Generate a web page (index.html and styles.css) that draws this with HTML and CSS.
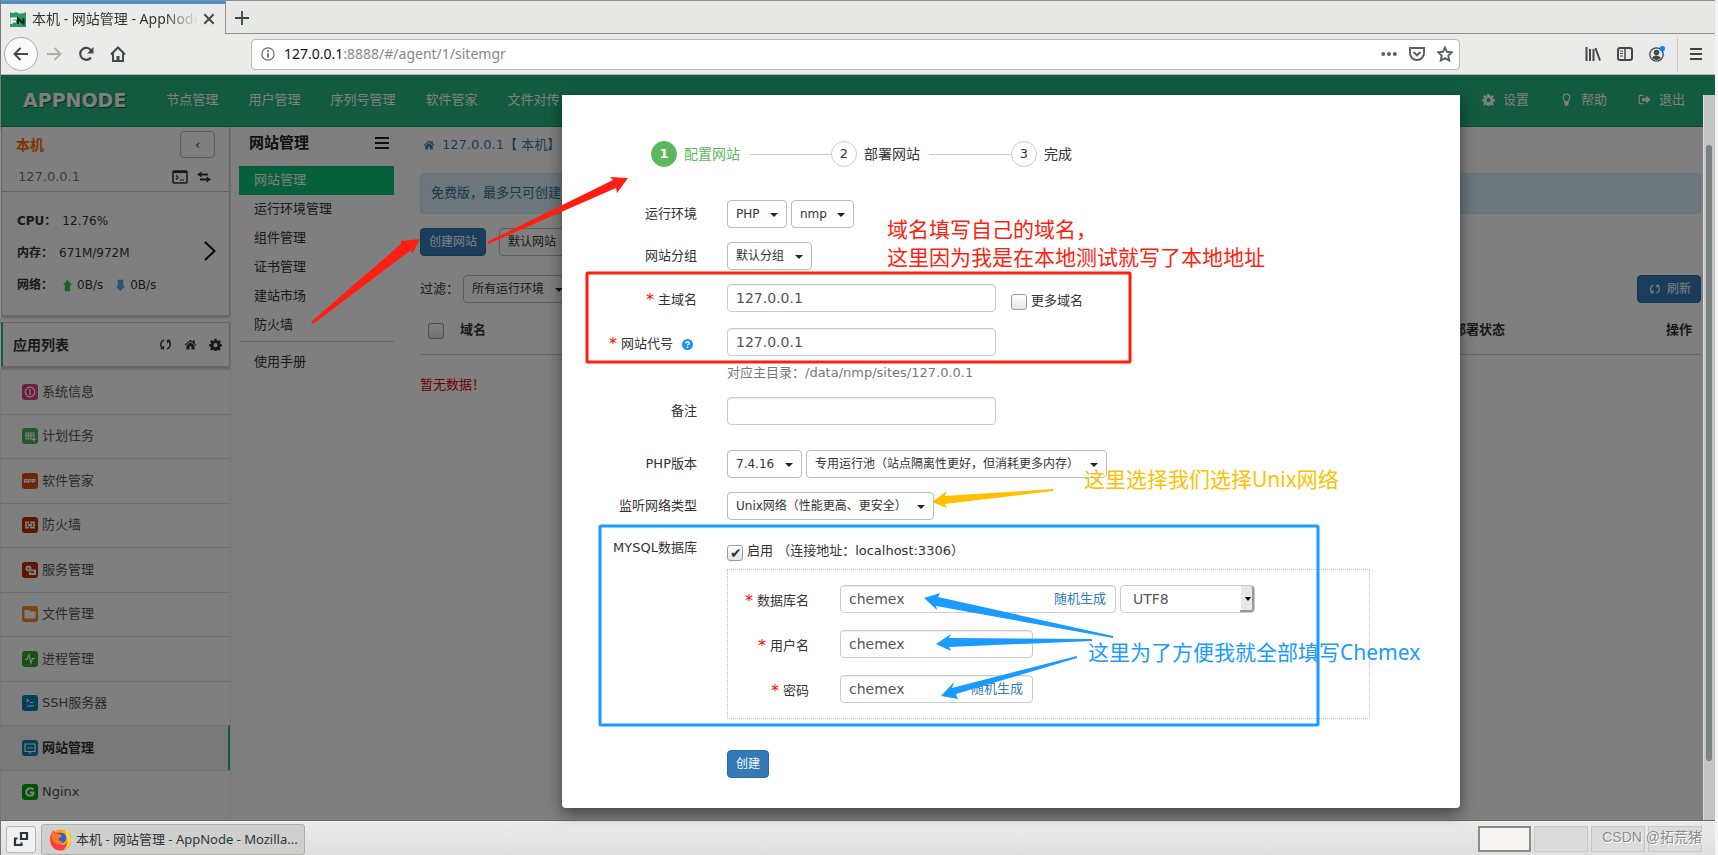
FILE: index.html
```html
<!DOCTYPE html>
<html lang="zh-CN">
<head>
<meta charset="utf-8">
<title>本机 - 网站管理 - AppNode</title>
<link rel="stylesheet" href="styles.css">
</head>
<body>
<svg class="sprite" aria-hidden="true">
  <symbol id="i-home" viewBox="0 0 16 16"><path d="M8 2 .8 8.3l.9 1L8 3.900l6.300 5.400.9-1L13 6.300V2.800h-2v1.800zM8 5.200 3 9.500V14h3.800v-3.800h2.400V14H13V9.500z" fill="currentColor"/></symbol>
  <symbol id="i-gear" viewBox="0 0 16 16"><path fill="currentColor" fill-rule="evenodd" d="M6.700 1h2.600l.4 2 1.400.6 1.700-1.200 1.800 1.800-1.200 1.700.6 1.400 2 .4v2.600l-2 .4-.6 1.400 1.200 1.700-1.800 1.800-1.700-1.200-1.400.6-.4 2H6.700l-.4-2-1.400-.6-1.700 1.200-1.800-1.800 1.200-1.700L2 10.700l-2-.4V7.700l2-.4.6-1.400-1.200-1.700 1.800-1.800 1.700 1.200L6.300 3zM8 6.300a2.500 2.500 0 1 0 0 5 2.500 2.500 0 0 0 0-5z"/></symbol>
  <symbol id="i-sync" viewBox="0 0 16 16"><path d="M6 2.500A6 6 0 0 0 4 12.500M10 13.500a6 6 0 0 0 2-10" fill="none" stroke="currentColor" stroke-width="1.800"/><path d="M1.500 13.800h4.700V9.200zM14.500 2.200H9.800v4.600z" fill="currentColor"/></symbol>
  <symbol id="i-lamp" viewBox="0 0 16 16"><path d="M5.800 10.500C5.500 8.800 4 8 4 5.500a4 4 0 0 1 8 0c0 2.500-1.500 3.300-1.800 5z" fill="none" stroke="currentColor" stroke-width="1.500"/><path d="M5.500 11h5v3l-1.500 2H7l-1.500-2z" fill="currentColor"/></symbol>
  <symbol id="i-exit" viewBox="0 0 16 16"><path d="M6.500 3H3a1.500 1.500 0 0 0-1.500 1.500v7A1.500 1.500 0 0 0 3 13h3.500" fill="none" stroke="currentColor" stroke-width="1.600"/><path d="M5 6h5V3l5.500 5L10 13v-3H5z" fill="currentColor"/></symbol>
</svg>

<div class="browser">
  <div class="tabs">
    <div class="tab">
      <svg class="fav" viewBox="0 0 16 16"><path fill="#2b9a66" d="M0 1q3 2 6 0 4 3 10 0v15H0z"/><path d="M1.500 13V7.500H7M1.500 10.500H6" fill="none" stroke="#fff" stroke-width="2"/><path d="M8 13V7.500l5.500 5V7" fill="none" stroke="#10271c" stroke-width="2"/></svg>
      <span class="tab-title">本机 - 网站管理 - AppNode</span>
      <button class="plain" aria-label="关闭标签"><svg class="x" viewBox="0 0 12 12"><path d="M2 2l8 8M10 2l-8 8" stroke="#4a4f50" stroke-width="1.800"/></svg></button>
    </div>
    <button class="plain newtab" aria-label="新标签"><svg viewBox="0 0 14 14"><path d="M7 0v14M0 7h14" stroke="#3e4344" stroke-width="1.800"/></svg></button>
  </div>
  <div class="toolbar">
    <button class="plain back" aria-label="后退"><svg viewBox="0 0 16 16"><path d="M15 8H1.500M7.500 2l-6 6 6 6" fill="none" stroke="#42494b" stroke-width="2"/></svg></button>
    <button class="plain nav-btn" aria-label="前进"><svg viewBox="0 0 16 16"><path d="M1 8h13.500M8.500 2l6 6-6 6" fill="none" stroke="#aeb0b0" stroke-width="2"/></svg></button>
    <button class="plain nav-btn" aria-label="刷新页面"><svg viewBox="0 0 16 16"><path d="M13.500 5A6 6 0 1 0 13 11.500" fill="none" stroke="#42494b" stroke-width="2.200"/><path d="M15.500 1v6.500H9z" fill="#42494b"/></svg></button>
    <button class="plain nav-btn" aria-label="主页"><svg viewBox="0 0 16 16"><path d="M1 8.500 8 1.500l7 7M3 7.500V15h10V7.500" fill="none" stroke="#42494b" stroke-width="2"/><path d="M6.500 15v-5h3v5z" fill="#42494b"/></svg></button>
    <label class="url">
      <svg class="info" viewBox="0 0 16 16"><circle cx="8" cy="8" r="7" fill="none" stroke="#666" stroke-width="1.300"/><path d="M8 3.500v2M8 7v5" stroke="#666" stroke-width="2"/></svg>
      <span>127.0.0.1</span><input type="text" aria-label="地址" value=":8888/#/agent/1/sitemgr">
      <svg viewBox="0 0 16 16"><g fill="#5b6062"><circle cx="2.200" cy="8" r="2"/><circle cx="8" cy="8" r="2"/><circle cx="13.800" cy="8" r="2"/></g></svg>
      <svg viewBox="0 0 16 16"><path d="M1 2h14v5a7 7 0 0 1-14 0zM4.500 6 8 9.300 11.500 6" fill="none" stroke="#5b6062" stroke-width="2"/></svg>
      <svg viewBox="0 0 16 16"><path d="m8 1.500 2 4.300 4.800.6-3.500 3.200.9 4.900L8 12.100l-4.200 2.400.9-4.900L1.200 6.400 6 5.800z" fill="none" stroke="#5b6062" stroke-width="1.900"/></svg>
    </label>
    <div class="tools">
      <button class="plain" aria-label="书库"><svg viewBox="0 0 16 16"><path d="M1.500 1v14M5 3v12M8.500 3v12M10.500 2l4.500 12.500" stroke="#42494b" stroke-width="2"/></svg></button>
      <button class="plain" aria-label="侧栏"><svg viewBox="0 0 16 16"><rect x="1" y="2" width="14" height="12" rx="2" fill="none" stroke="#42494b" stroke-width="2"/><path d="M8 2v12" stroke="#42494b" stroke-width="1.500"/><path d="M3 5h3M3 7.500h3M3 10h3" stroke="#42494b"/></svg></button>
      <button class="plain" aria-label="账户"><svg viewBox="0 0 16 16"><circle cx="7.500" cy="8.500" r="6.700" fill="none" stroke="#42494b" stroke-width="1.300"/><circle cx="7.500" cy="6.500" r="2.800" fill="#42494b"/><path d="M3 12q1-3 4.500-2.500T12 12q-4.500 4-9 0" fill="#42494b"/><circle cx="13.300" cy="2.700" r="2.700" fill="#0a84ff"/></svg></button>
      <span class="sep"></span>
      <button class="plain" aria-label="菜单"><svg class="menu" viewBox="0 0 12 12"><path d="M0 1h12M0 6h12M0 11h12" stroke="#3e4344" stroke-width="2"/></svg></button>
    </div>
  </div>
</div>

<main class="stage">
  <header class="topbar">
    <span class="logo">APPNODE</span>
    <nav>
      <a href="#">节点管理</a><a href="#">用户管理</a><a href="#">序列号管理</a><a href="#">软件管家</a><a href="#">文件对传</a>
    </nav>
    <nav class="right">
      <a href="#"><svg><use href="#i-gear"/></svg>设置</a>
      <a href="#"><svg><use href="#i-lamp"/></svg>帮助</a>
      <a href="#"><svg><use href="#i-exit"/></svg>退出</a>
    </nav>
  </header>
  <div class="columns">
    <aside class="side">
      <section class="host">
        <div class="host-top"><b>本机</b><button class="collapse" aria-label="收起">‹</button></div>
        <div class="host-ip"><span>127.0.0.1</span>
          <svg class="term" viewBox="0 0 16 14"><rect x="1" y="1" width="14" height="12" rx="1" fill="none" stroke="#333" stroke-width="1.600"/><path d="M1 2h14" stroke="#333" stroke-width="2"/><path d="m4 5.500 2 2-2 2M8 10h4" fill="none" stroke="#333" stroke-width="1.200"/></svg>
          <svg class="swap" viewBox="0 0 14 12"><path d="M3 3.500h8M3 8.500h8" stroke="#333" stroke-width="1.800"/><path d="M4.500.5v6L0 3.500zM9.500 5.500v6l4.500-3z" fill="#333"/></svg>
        </div>
        <div class="stats">
          <p><b>CPU：</b>12.76%</p>
          <p><b>内存：</b>671M/972M</p>
          <p><b>网络：</b><svg class="ar" viewBox="0 0 10 13"><path d="M5 0l5 6H8v7H2V6H0z" fill="#3fbf3f"/></svg>0B/s<svg class="ar down" viewBox="0 0 10 13"><path d="M5 13l5-6H8V0H2v7H0z" fill="#4aa8dc"/></svg>0B/s</p>
          <svg class="chev" viewBox="0 0 12 20"><path d="m1 1 9.500 9L1 19" fill="none" stroke="#111" stroke-width="2"/></svg>
        </div>
      </section>
      <div class="apps-head"><b>应用列表</b><svg><use href="#i-sync"/></svg><svg><use href="#i-home"/></svg><svg><use href="#i-gear"/></svg></div>
      <ul class="apps">
        <li><svg class="c1" viewBox="0 0 16 16"><circle cx="8" cy="8" r="4.800"/><path d="M8 5v6"/></svg><a href="#">系统信息</a></li>
        <li><svg class="c2" viewBox="0 0 16 16"><path d="M4 5h8v6H4zM4 7.500h8M6.500 5v6M9 5v6M10 11.500h4M12 9.500v4"/></svg><a href="#">计划任务</a></li>
        <li><svg class="c3" viewBox="0 0 16 16"><path d="M2.500 10V6.500H5V10M2.500 8.500H5M6.700 10V6.500H9v2H6.700M10.700 10V6.500H13v2h-2.300"/></svg><a href="#">软件管家</a></li>
        <li><svg class="c4" viewBox="0 0 16 16"><path d="M3 5.500h4M8 5.500h5M3 8h2M6 8h4M11 8h2M3 10.500h4M8 10.500h5" stroke-width="1.800"/></svg><a href="#">防火墙</a></li>
        <li><svg class="c4" viewBox="0 0 16 16"><circle cx="6.500" cy="6.500" r="2" stroke-width="2"/><path d="M9 8.500h4V12H8V10" stroke-width="2"/></svg><a href="#">服务管理</a></li>
        <li><svg class="c5" viewBox="0 0 16 16"><path d="M3 4.500h4l1 1.500h5v6H3z" fill="#fff"/></svg><a href="#">文件管理</a></li>
        <li><svg class="c6" viewBox="0 0 16 16"><path d="M3 8.500h2L7 4l2 8 1.500-4.500H13"/></svg><a href="#">进程管理</a></li>
        <li><svg class="c7" viewBox="0 0 16 16"><path d="m4.500 4 2 1.500-2 1.500M8 7.500h3M5 11h7" /></svg><a href="#">SSH服务器</a></li>
        <li class="on"><svg class="c7" viewBox="0 0 16 16"><path d="M3 4h10v7.500H3zM5 8h6M6.500 13h3"/></svg><a href="#">网站管理</a></li>
        <li><svg class="c8" viewBox="0 0 16 16"><path d="M11.500 5.500Q10 4 8 4.200 4.300 4.500 4.300 8T8 11.800q3.500 0 3.500-3.300H8" stroke-width="2"/></svg><a href="#">Nginx</a></li>
      </ul>
    </aside>
    <aside class="sub">
      <h2>网站管理<svg viewBox="0 0 14 12"><path d="M0 1h14M0 6h14M0 11h14" stroke="#222" stroke-width="2"/></svg></h2>
      <a class="on" href="#">网站管理</a><a href="#">运行环境管理</a><a href="#">组件管理</a><a href="#">证书管理</a><a href="#">建站市场</a><a href="#">防火墙</a>
      <hr>
      <a href="#">使用手册</a>
    </aside>
    <section class="content">
      <a class="crumb" href="#"><svg><use href="#i-home"/></svg>127.0.0.1【 本机】</a>
      <div class="alert">免费版，最多只可创建</div>
      <div class="acts"><button class="btn primary">创建网站</button><button class="btn">默认网站</button></div>
      <div class="filter"><label for="env">过滤：</label><span class="dd"><select id="env"><option>所有运行环境</option></select></span><button class="btn primary refresh"><svg><use href="#i-sync"/></svg>刷新</button></div>
      <table>
        <thead><tr><th class="ck"><input type="checkbox" aria-label="全选"></th><th>域名</th><th class="state">部署状态</th><th class="op">操作</th></tr></thead>
        <tbody><tr><td colspan="4">暂无数据！</td></tr></tbody>
      </table>
    </section>
  </div>

  <div class="shade"></div>
  <div class="scroll"><span></span></div>

  <form class="modal" role="dialog" aria-label="创建网站">
    <ol class="steps">
      <li class="on"><i>1</i>配置网站</li>
      <li><i>2</i>部署网站</li>
      <li><i>3</i>完成</li>
    </ol>
    <div class="row"><label for="lang">运行环境</label><div><span class="dd"><select id="lang"><option>PHP</option></select></span><span class="dd"><select aria-label="环境"><option>nmp</option></select></span></div></div>
    <div class="row"><label for="grp">网站分组</label><div><span class="dd"><select id="grp"><option>默认分组</option></select></span></div></div>
    <div class="row need"><label for="dom"><em>*</em>主域名</label><div><input class="txt" id="dom" type="text" value="127.0.0.1"><label class="more"><input type="checkbox">更多域名</label></div></div>
    <div class="row need code"><label for="code"><em>*</em>网站代号<svg class="help" viewBox="0 0 12 12"><circle cx="6" cy="6" r="6" fill="#1b8efa"/><path d="M4 4.700Q4.200 3 6 3t2 1.500Q8 5.400 6 6.400V7.200M6 8.300v1.500" fill="none" stroke="#fff" stroke-width="1.500"/></svg></label><div><input class="txt" id="code" type="text" value="127.0.0.1"></div></div>
    <p class="hint">对应主目录：/data/nmp/sites/127.0.0.1</p>
    <div class="row note"><label for="note">备注</label><div><input class="txt" id="note" type="text"></div></div>
    <div class="row php"><label for="ver">PHP版本</label><div><span class="dd"><select id="ver"><option>7.4.16</option></select></span><span class="dd"><select aria-label="运行池"><option>专用运行池（站点隔离性更好，但消耗更多内存）</option></select></span></div></div>
    <div class="row"><label for="net">监听网络类型</label><div><span class="dd"><select id="net"><option>Unix网络（性能更高、更安全）</option></select></span></div></div>
    <div class="row db"><label for="mysql">MYSQL数据库</label><div class="enable"><input id="mysql" type="checkbox" checked><label for="mysql">启用 （连接地址：localhost:3306）</label></div></div>
    <fieldset>
      <div class="row need"><label for="dbn"><em>*</em>数据库名</label><div><span class="gen wide"><input class="txt" id="dbn" type="text" value="chemex"><button type="button">随机生成</button></span><span class="native"><select aria-label="字符集"><option>UTF8</option></select></span></div></div>
      <div class="row need"><label for="usr"><em>*</em>用户名</label><div><span class="gen"><input class="txt" id="usr" type="text" value="chemex"></span></div></div>
      <div class="row need"><label for="pwd"><em>*</em>密码</label><div><span class="gen"><input class="txt" id="pwd" type="text" value="chemex"><button type="button">随机生成</button></span></div></div>
    </fieldset>
    <button type="button" class="btn primary submit">创建</button>
  </form>

  <svg class="marks" aria-hidden="true">
    <g transform="translate(-1 -75)">
      <g fill="#ff1e10">
        <path d="M311 322 401 244 401 241 420 239 412 254 411 250 313 324z"/>
        <path d="M487 242 613 180 610 177 628 178 617 193 616 188 488 244z"/>
      </g>
      <path fill="#ffc000" d="M1053 489 945 496 947 491 932 502 947 508 945 504 1053 491z"/>
      <g fill="#1a9bff">
        <path d="M1113 636 938 597 940 593 924 598 937 610 936 606 1113 638z"/>
        <path d="M1092 639 949 638 951 634 936 644 951 651 949 647 1092 641z"/>
        <path d="M1077 656 952 688 954 682 941 696 958 699 956 694 1077 658z"/>
      </g>
      <rect x="587" y="273" width="543" height="89" rx="1" fill="none" stroke="#ff1e10" stroke-width="3"/>
      <rect x="600" y="526" width="718" height="199" rx="1" fill="none" stroke="#1a9bff" stroke-width="3"/>
    </g>
  </svg>
  <p class="mark red">域名填写自己的域名，<br>这里因为我是在本地测试就写了本地地址</p>
  <p class="mark gold">这里选择我们选择Unix网络</p>
  <p class="mark blue">这里为了方便我就全部填写Chemex</p>
</main>

<footer class="taskbar">
  <button class="desk" aria-label="显示桌面"><svg viewBox="0 0 16 16"><path d="M8 2h6v6H8z" fill="none" stroke="#2e3436" stroke-width="2.200"/><path d="M4.500 7.500H2V14h6.500v-2.500" fill="none" stroke="#2e3436" stroke-width="2.200"/></svg></button>
  <button class="win"><svg viewBox="0 0 24 24"><circle cx="12" cy="12.500" r="11" fill="#ff9a1f"/><path d="M1 10Q2 5 5 2q0 3 3 3l4-1q-4 3-2 6 2 1 4 1-1 5-5 4 3 4 8 2 5-2 4-9-1-3-3-5 5 2 5 9-1 11-11 11.500Q1 23 1 10z" fill="#ff3b4a"/><path d="M16 1q6 3 7 10 0 9-8 12 6-6 4-12z" fill="#ffd83a"/><circle cx="12.500" cy="10.500" r="5.500" fill="#1d64d8"/><path d="M3 4q3 3 6 2 4 0 4 3l-3 2q0 3 4 3-1 3-5 3-5-1-6-7z" fill="#ff7a1c"/></svg>本机 - 网站管理 - AppNode - Mozilla...</button>
  <div class="pager"><span class="cur"></span><span></span><span></span><span></span><b>CSDN @拓荒猪</b></div>
</footer>
</body>
</html>
```
FILE: styles.css
```css
* { box-sizing: border-box; }
body {
  margin: 0;
  min-height: 100vh;
  display: flex;
  flex-direction: column;
  font: 13px/18px "DejaVu Sans", "Noto Sans CJK SC", sans-serif;
  color: #333;
  background: #f4f4f4;
  overflow-x: hidden;
}
a { color: inherit; text-decoration: none; }
p, ul, ol, h2 { margin: 0; padding: 0; list-style: none; }
button, input, select { font: inherit; color: inherit; }
svg { flex: none; display: block; }
.sprite { position: absolute; width: 0; height: 0; }
.plain { border: 0; background: none; padding: 0; display: flex; align-items: center; justify-content: center; }

/* browser chrome */
.browser, .taskbar { font-family: "Noto Sans", "Noto Sans CJK SC", sans-serif; margin-right: 3px; }
.browser { border-left: 1px solid #777; background: #ebebea; }
.tabs { display: flex; height: 34px; border-top: 1px solid #8f8f8c; background: #e8e8e6; box-shadow: inset 0 -1px #8f8f8c; }
.tab {
  width: 225px; display: flex; align-items: center; padding: 0 9px; background: #ebebea;
  border-top: 3px solid #4a90d9; border-right: 1px solid #8f8f8c;
}
.fav { width: 16px; height: 16px; margin-right: 6px; }
.tab-title {
  flex: 1; font-size: 14px; white-space: nowrap; overflow: hidden;
  -webkit-mask-image: linear-gradient(90deg, #000 80%, transparent);
  mask-image: linear-gradient(90deg, #000 80%, transparent);
}
.x { width: 14px; height: 14px; margin: 0 0 0 4px; }
.newtab { width: 32px; }
.newtab svg { width: 14px; height: 14px; }
.toolbar { height: 41px; display: flex; align-items: center; padding-left: 3px; border-bottom: 1px solid #b5b5b2; }
.toolbar svg { width: 16px; height: 16px; }
.back { width: 34px; height: 34px; border: 1px solid #aaa; border-radius: 50%; background: #fbfbfb; }
.nav-btn { width: 32px; height: 32px; }
.url {
  flex: 1; height: 31px; margin-left: 117px; padding: 0 6px 0 9px; display: flex; align-items: center; gap: 12px;
  background: #fff; border: 1px solid #b8b8b5; border-radius: 4px; font-size: 14px; color: #111; margin-right: 125px;
}
.url .info { width: 14px; height: 14px; margin-right: -3px; }
.url span { margin-right: -12px; }
.url input { flex: 1; min-width: 0; border: 0; padding: 0; color: #888; background: none; }
.tools { display: flex; align-items: center; gap: 16px; padding-right: 13px; }
.tools .sep { width: 1px; height: 34px; background: #ccc; margin: 0 -4px; }
.tools .menu { width: 12px; height: 12px; }

/* page */
.stage { position: relative; flex: 1; display: flex; flex-direction: column; background: #fff; margin-right: 3px; border-left: 1px solid #777; border-bottom: 1px solid #666; }
.topbar { height: 52px; background: #24b680; border-bottom: 1px solid #1a9a6a; display: flex; align-items: center; padding: 0 30px 2px 22px; color: #fff; }
.topbar nav { display: flex; gap: 30px; margin-left: 40px; }
.topbar .right { margin-left: auto; gap: 31px; }
.topbar a { display: flex; align-items: center; }
.topbar svg { width: 13px; height: 13px; margin-right: 8px; }
.logo { font-size: 19px; font-weight: bold; line-height: 20px; text-shadow: 1px 1px 1px #0a5a3c; }
.columns { flex: 1; display: flex; }
.side { width: 230px; border-right: 1px solid #eaeaea; }
.host { border: 1px solid #ccc; border-top: 0; box-shadow: 0 2px 2px #ccc; }
.host-top { display: flex; justify-content: space-between; align-items: center; padding: 3px 14px 0; height: 32px; font-size: 14px; color: #ff6a00; }
.collapse { width: 35px; height: 27px; padding: 0; border: 1px solid #bbb; border-radius: 4px; background: none; color: #333; font-size: 13px; }
.host-ip { display: flex; align-items: center; height: 33px; padding: 4px 18px 0 16px; border-bottom: 1px solid #ccc; color: #777; }
.term { width: 16px; height: 14px; margin: 0 9px 0 auto; }
.swap { width: 14px; height: 12px; }
.stats { position: relative; padding: 13px 15px 14px; font-size: 12px; line-height: 32px; }
.stats p { display: flex; align-items: center; }
.stats b { margin-right: 6px; }
.ar { width: 9px; height: 13px; margin: 0 5px 0 6px; }
.down { margin-left: 13px; }
.stats b + svg { margin-left: 4px; }
.chev { position: absolute; right: 13px; top: 49px; width: 12px; height: 20px; }
.apps-head { display: flex; align-items: center; gap: 12px; height: 45px; margin-top: 6px; padding: 0 7px 0 10px; border: 1px solid #ccc; border-left: 2px solid #24b680; box-shadow: 0 2px 2px #ccc; font-size: 14px; }
.apps-head b { margin-right: auto; }
.apps-head svg { width: 13px; height: 13px; }
.apps { margin-top: 2px; }
.apps li { height: 45px; display: flex; align-items: center; gap: 4px; padding: 0 0 1px 21px; border-top: 1px solid #ddd; color: #555; }
.apps li:nth-child(even) { height: 44px; }
.apps svg { width: 16px; height: 16px; border-radius: 3px; fill: none; stroke: #fff; stroke-width: 1.200; }
.apps .on { background: #f3f3f3; border-right: 2px solid #24b680; font-weight: bold; color: #333; }
.c1 { background: #e0407c; } .c2 { background: #48b04c; } .c3 { background: #dd4a18; } .c4 { background: #b52f05; }
.c5 { background: #f08a20; } .c6 { background: #2ea52e; } .c7 { background: #0a7cb0; } .c8 { background: #00a800; }
.sub { width: 155px; margin: 0 26px 0 8px; }
.sub h2 { display: flex; align-items: center; justify-content: space-between; height: 39px; padding: 0 5px 8px 10px; font-size: 15px; color: #222; }
.sub svg { width: 14px; height: 12px; }
.sub a { display: block; height: 29px; line-height: 27px; padding-left: 15px; }
.sub .on { background: #0cc078; color: #fff; }
.sub hr { border: 0; border-top: 1px solid #ccc; margin: 1px 0 6px; }
.content { flex: 1; padding: 8px 14px 0 0; }
.crumb { display: flex; align-items: center; height: 20px; gap: 7px; padding-left: 3px; color: #337ab7; }
.crumb svg { width: 12px; height: 12px; }
.alert { margin-top: 18px; height: 41px; padding: 10px; border: 1px solid #bce8f1; border-radius: 4px; background: #d9edf7; color: #31708f; }
.acts { display: flex; gap: 13px; margin-top: 14px; }
.btn { height: 28px; padding: 0 8px; font-size: 12px; line-height: 18px; border: 1px solid #bbb; border-radius: 4px; background: #fff; display: flex; align-items: center; }
.btn.primary { background: #337ab7; border-color: #2e6da4; color: #fff; }
.filter { display: flex; align-items: center; margin-top: 19px; }
.filter label { margin-right: 4px; }
.refresh { margin-left: auto; padding: 0 9px 0 11px; }
.refresh svg { width: 12px; height: 12px; margin-right: 6px; }
table { width: 100%; border-collapse: collapse; }
th { height: 51px; padding: 4px 0 0; text-align: left; border-bottom: 1px solid #ccc; }
.ck { width: 40px; padding-left: 8px; }
.state, .op { text-align: right; }
.op { width: 196px; padding-right: 9px; }
td { padding: 21px 0; color: #e00000; }
input[type="checkbox"] {
  appearance: none; width: 16px; height: 16px; margin: 0; flex: none; border: 1px solid #999; border-radius: 3px;
  background: linear-gradient(#fff, #e4e4e4); vertical-align: middle; position: relative;
}
input[type="checkbox"]:checked::after { content: "✔"; position: absolute; left: 2px; top: -2px; font-size: 14px; color: #2e3436; }

.shade { position: absolute; inset: 0; background: rgba(0, 0, 0, .5); }
.scroll { position: absolute; top: 20px; right: 0; bottom: 0; width: 12px; background: #c3c5c4; border-left: 1px solid #ddd; }
.scroll span { display: block; width: 6px; height: 85%; margin: 50px 0 0 2px; border-radius: 3px; background: #7c8182; }

/* dialog */
.modal { position: absolute; left: 561px; right: 255px; top: 20px; padding: 46px 90px 30px 0; background: #fff; border-radius: 0 0 4px 4px; box-shadow: 0 5px 15px rgba(0, 0, 0, .5); }
.steps { display: flex; margin: 0 0 33px 89px; height: 26px; font-size: 14px; }
.steps li { display: flex; align-items: center; }
.steps i { width: 26px; height: 26px; margin-right: 7px; border: 1px solid #ccc; border-radius: 50%; font: 13px/24px "DejaVu Sans", sans-serif; text-align: center; }
.steps li:not(:last-child)::after { content: ""; width: 82px; height: 1px; margin-left: 9px; background: #ccc; }
.steps .on { color: #5cb85c; }
.steps .on i { background: #5cb85c; border-color: #5cb85c; color: #fff; font-weight: bold; }
.row { display: grid; grid-template-columns: 135px 1fr; column-gap: 30px; margin-top: 14px; }
.row > label { display: flex; align-items: center; justify-content: flex-end; height: 28px; }
.row > div { display: flex; gap: 4px; }
.need > label { padding-top: 3px; }
em { font-style: normal; color: #f00; margin-right: 4px; font-size: 16px; }
.txt { width: 269px; height: 28px; padding: 0 8px; border: 1px solid #ccc; border-radius: 4px; background: #fff; box-shadow: inset 0 1px 1px rgba(0, 0, 0, .08); font-size: 14px; color: #555; }
.dd { position: relative; display: flex; }
.dd select { appearance: none; height: 28px; padding: 0 26px 0 8px; border: 1px solid #bbb; border-radius: 4px; background: #fff; font-size: 12px; color: #333; }
.dd::after { content: ""; position: absolute; right: 9px; top: 13px; border: 4px solid transparent; border-top-color: #222; border-bottom: 0; pointer-events: none; }
.more { display: flex; align-items: center; gap: 4px; margin-left: 11px; padding-top: 6px; }
.more input { margin-top: 2px; }
.code { margin-top: 16px; }
.help { width: 11px; height: 11px; margin: 2px 4px 0 9px; }
.hint { margin: 7px 0 0 165px; color: #777; line-height: 19px; }
.note { margin-top: 15px; }
.php { margin-top: 25px; }
.db { margin-top: 20px; }
.db > label { height: 16px; }
.enable { align-items: center; height: 22px; }
.enable input { margin-top: 3px; }
fieldset { min-width: 0; margin: 7px 0 0 165px; padding: 15px 0; border: 1px dotted #bbb; }
fieldset .row { grid-template-columns: 81px 1fr; column-gap: 31px; margin-top: 17px; }
fieldset .row:first-child { margin-top: 0; }
.gen { position: relative; width: 193px; }
.gen.wide { width: 276px; }
.gen .txt { width: 100%; }
.gen button { position: absolute; right: 10px; top: 5px; padding: 0; border: 0; background: none; color: #337ab7; }
.native { position: relative; display: flex; width: 135px; }
.native select { appearance: none; width: 100%; padding: 0 12px; border: 1px solid #ccc; border-radius: 4px; background: linear-gradient(90deg, #fff 90%, #e8e8e6 90%); font-size: 14px; color: #555; }
.native::before { content: ""; position: absolute; right: 1px; top: 1px; bottom: 1px; width: 12px; border: solid #999; border-width: 0 2px 2px 0; border-radius: 0 3px 3px 0; pointer-events: none; }
.native::after { content: ""; position: absolute; right: 4px; top: 12px; border: 3px solid transparent; border-top: 4px solid #000; border-bottom: 0; pointer-events: none; }
.submit { margin: 31px 0 0 165px; }

/* hand-drawn notes over the page */
.marks { position: absolute; inset: 0; width: 100%; height: 100%; pointer-events: none; }
.mark { position: absolute; font: 21px/28px "Noto Sans", "Noto Sans CJK SC", sans-serif; white-space: nowrap; }
.red { left: 886px; top: 140px; color: #ff1e10; }
.gold { left: 1083px; top: 390px; color: #ffc000; }
.blue { left: 1087px; top: 563px; color: #1a9bff; }

.taskbar { height: 34px; display: flex; align-items: center; padding: 2px 0 0 5px; background: linear-gradient(#ececec, #dfdfdf); border-left: 1px solid #777; }
.desk { width: 30px; height: 27px; padding: 0 6px; border: 1px solid #b5b5b2; border-radius: 3px; background: #f1f1f1; }
.win { width: 264px; height: 31px; margin-left: 5px; padding: 0 7px; display: flex; align-items: center; gap: 4px; border: 1px solid #b0b0ad; border-radius: 3px; background: #cfcfcd; font-size: 13px; white-space: nowrap; color: #2e3436; }
.win svg { width: 23px; height: 23px; }
.pager { position: relative; display: flex; gap: 3px; margin: 0 13px 0 auto; }
.pager span { width: 54px; height: 26px; border: 1px solid #c6c6c4; background: #dcdcdc; }
.pager .cur { width: 53px; border: 2px solid #8b8b88; background: #f6f5f3; }
.pager b { position: absolute; right: 0; top: 2px; font: 14px/18px "Liberation Sans", "Noto Sans CJK SC", sans-serif; color: #8c8c8c; text-shadow: 1px 1px #fff; }
```
